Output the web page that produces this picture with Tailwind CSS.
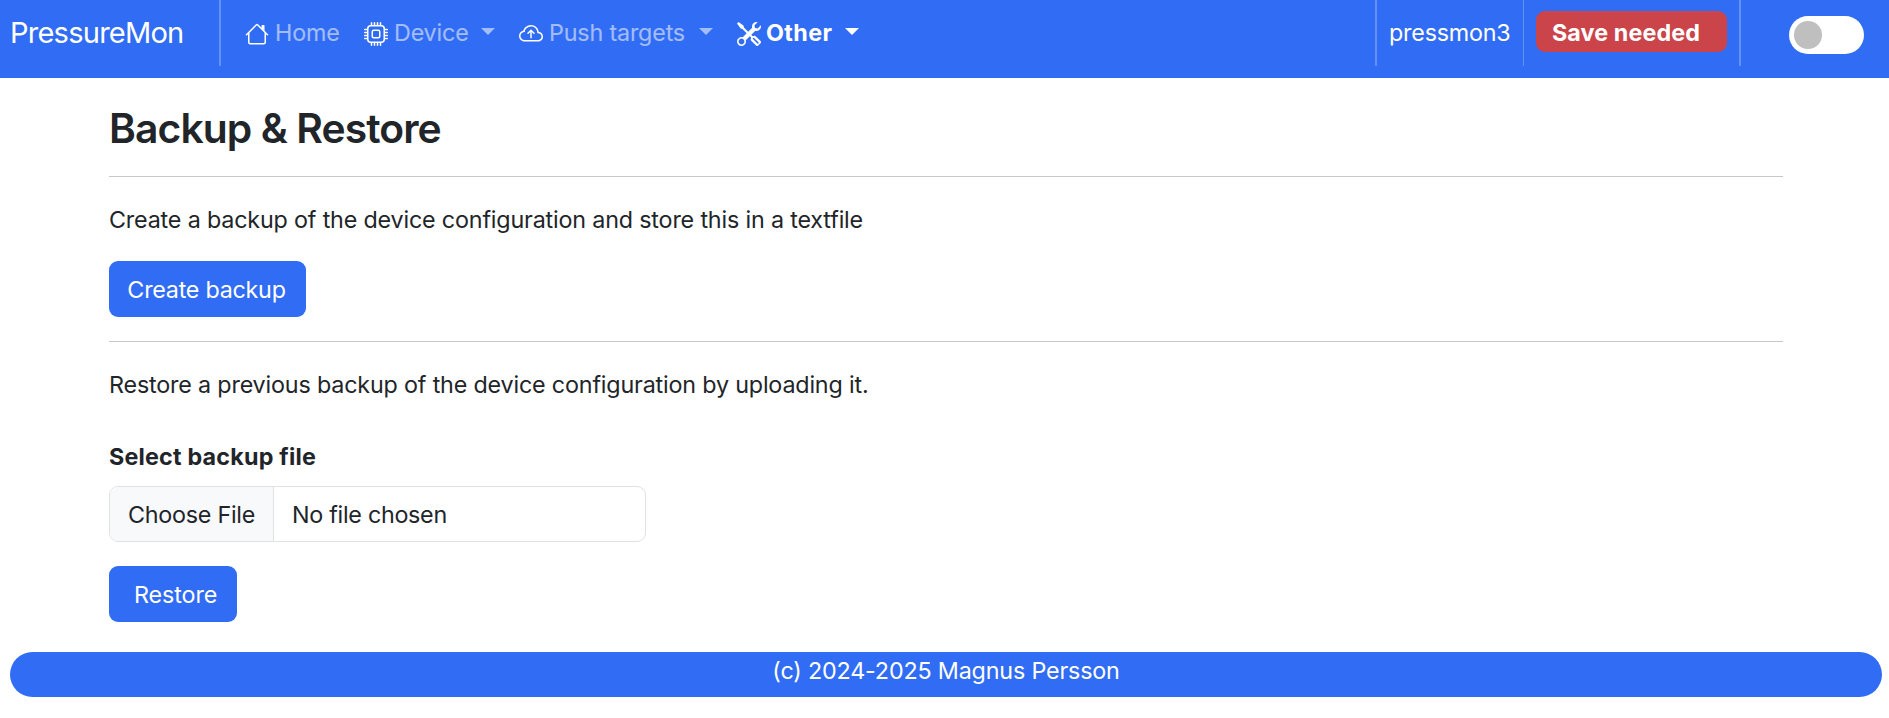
<!DOCTYPE html>
<html lang="en">
<head>
<meta charset="utf-8">
<title>PressureMon</title>
<script src="https://cdn.jsdelivr.net/npm/@tailwindcss/browser@4"></script>
</head>
<body class="h-[718px] overflow-hidden bg-white font-['Inter',sans-serif] text-[23.3px] leading-9 tracking-[-0.17px] text-[#212529]">
<nav class="flex h-[78px] items-start bg-[#316cf4] text-white">
  <a class="w-[219px] shrink-0 pl-[10px] pt-[15px] text-[29.1px] tracking-[-0.8px] whitespace-nowrap">PressureMon</a>
  <div class="h-[66px] w-0.5 bg-white/25"></div>
  <div class="ml-6 flex h-[66px] items-center gap-[24px] whitespace-nowrap">
    <a class="flex w-[95px] items-center gap-[6px]">
      <svg class="mt-0.5 size-6 shrink-0" viewBox="0 0 16 16" fill="currentColor"><path fill-rule="evenodd" d="M2 13.5V7h1v6.5a.5.5 0 0 0 .5.5h9a.5.5 0 0 0 .5-.5V7h1v6.5a1.5 1.5 0 0 1-1.5 1.5h-9A1.5 1.5 0 0 1 2 13.5zm11-11V6l-2-2V2.500a.5.5 0 0 1 .5-.5h1a.5.5 0 0 1 .5.5z"/><path fill-rule="evenodd" d="M7.293 1.500a1 1 0 0 1 1.414 0l6.647 6.646a.5.5 0 0 1-.708.708L8 2.207 1.354 8.854a.5.5 0 1 1-.708-.708L7.293 1.500z"/></svg>
      <span class="text-white/55">Home</span>
    </a>
    <a class="flex w-[131px] items-center gap-[6px]">
      <svg class="mt-0.5 size-6 shrink-0" viewBox="0 0 16 16" fill="currentColor"><path d="M5 0a.5.5 0 0 1 .5.5V2h1V.5a.5.5 0 0 1 1 0V2h1V.5a.5.5 0 0 1 1 0V2h1V.5a.5.5 0 0 1 1 0V2A2.500 2.500 0 0 1 14 4.500h1.500a.5.5 0 0 1 0 1H14v1h1.500a.5.5 0 0 1 0 1H14v1h1.500a.5.5 0 0 1 0 1H14v1h1.500a.5.5 0 0 1 0 1H14a2.500 2.500 0 0 1-2.500 2.500v1.500a.5.5 0 0 1-1 0V14h-1v1.500a.5.5 0 0 1-1 0V14h-1v1.500a.5.5 0 0 1-1 0V14h-1v1.500a.5.5 0 0 1-1 0V14A2.500 2.500 0 0 1 2 11.500H.5a.5.5 0 0 1 0-1H2v-1H.5a.5.5 0 0 1 0-1H2v-1H.5a.5.5 0 0 1 0-1H2v-1H.5a.5.5 0 0 1 0-1H2A2.500 2.500 0 0 1 4.500 2V.5A.5.5 0 0 1 5 0m-.5 3A1.500 1.500 0 0 0 3 4.500v7A1.500 1.500 0 0 0 4.500 13h7a1.500 1.500 0 0 0 1.500-1.500v-7A1.500 1.500 0 0 0 11.500 3zM5 6.500A1.500 1.500 0 0 1 6.500 5h3A1.500 1.500 0 0 1 11 6.500v3A1.500 1.500 0 0 1 9.500 11h-3A1.500 1.500 0 0 1 5 9.500zM6.500 6a.5.5 0 0 0-.5.5v3a.5.5 0 0 0 .5.5h3a.5.5 0 0 0 .5-.5v-3a.5.5 0 0 0-.5-.5z"/></svg>
      <span class="text-white/55">Device</span>
      <i class="mt-[-3px] ml-auto border-x-[7.2px] border-t-[7.2px] border-x-transparent border-t-white/55"></i>
    </a>
    <a class="flex w-[194px] items-center gap-[6px]">
      <svg class="mt-0.5 size-6 shrink-0" viewBox="0 0 16 16" fill="currentColor"><path fill-rule="evenodd" d="M7.646 5.146a.5.5 0 0 1 .708 0l2 2a.5.5 0 0 1-.708.708L8.500 6.707V10.500a.5.5 0 0 1-1 0V6.707L6.354 7.854a.5.5 0 1 1-.708-.708z"/><path d="M4.406 3.342A5.530 5.530 0 0 1 8 2c2.690 0 4.923 2 5.166 4.579C14.758 6.804 16 8.137 16 9.773 16 11.569 14.502 13 12.687 13H3.781C1.708 13 0 11.366 0 9.318c0-1.763 1.266-3.223 2.942-3.593.143-.863.698-1.723 1.464-2.383m.653.757c-.757.653-1.153 1.440-1.153 2.056v.448l-.445.049C2.064 6.805 1 7.952 1 9.318 1 10.785 2.230 12 3.781 12h8.906C13.980 12 15 10.988 15 9.773c0-1.216-1.020-2.228-2.313-2.228h-.5v-.5C12.188 4.825 10.328 3 8 3a4.530 4.530 0 0 0-2.941 1.100z"/></svg>
      <span class="text-white/55">Push targets</span>
      <i class="mt-[-3px] ml-auto border-x-[7.2px] border-t-[7.2px] border-x-transparent border-t-white/55"></i>
    </a>
    <a class="flex w-[122px] items-center gap-[5px]">
      <svg class="mt-0.5 size-6 shrink-0" viewBox="0 0 16 16" fill="currentColor"><path d="M1 0 0 1l2.200 3.081a1 1 0 0 0 .815.419h.07a1 1 0 0 1 .708.293l2.675 2.675-2.617 2.654A3.003 3.003 0 0 0 0 13a3 3 0 1 0 5.878-.851l2.654-2.617.968.968-.305.914a1 1 0 0 0 .242 1.023l3.270 3.270a.997.997 0 0 0 1.414 0l1.586-1.586a.997.997 0 0 0 0-1.414l-3.270-3.270a1 1 0 0 0-1.023-.242L10.500 9.500l-.96-.96 2.680-2.643A3.005 3.005 0 0 0 16 3q0-.405-.102-.777l-2.140 2.141L12 4l-.364-1.757L13.777.102a3 3 0 0 0-3.675 3.680L7.462 6.460 4.793 3.793a1 1 0 0 1-.293-.707v-.071a1 1 0 0 0-.419-.814zm9.646 10.646a.5.5 0 0 1 .708 0l2.914 2.915a.5.5 0 0 1-.707.707l-2.915-2.914a.5.5 0 0 1 0-.708M3 11l.471.242.529.026.287.445.445.287.026.529L5 13l-.242.471-.026.529-.445.287-.287.445-.529.026L3 15l-.471-.242L2 14.732l-.287-.445L1.268 14l-.026-.529L1 13l.242-.471.026-.529.445-.287.287-.445.529-.026z"/></svg>
      <span class="font-bold tracking-[0.4px]">Other</span>
      <i class="mt-[-3px] ml-auto border-x-[7.2px] border-t-[7.2px] border-x-transparent border-t-white"></i>
    </a>
  </div>
  <div class="ml-auto flex h-[66px] shrink-0 items-center whitespace-nowrap">
    <div class="h-full w-0.5 bg-white/25"></div>
    <span class="w-[146px] pl-3 tracking-[-0.2px]">pressmon3</span>
    <div class="h-full w-px bg-white/25"></div>
    <button class="mt-[-3px] ml-3 h-[41px] w-[191px] rounded-[9px] bg-[#cb444a] pt-[3px] pl-4 text-left font-bold tracking-[0.1px]">Save needed</button>
    <div class="ml-3 h-full w-0.5 bg-white/25"></div>
    <div class="mt-1 mr-[25px] ml-12 flex h-[38px] w-[75px] items-center rounded-full bg-white pl-[5px]"><div class="size-[27.5px] rounded-full bg-[#bfbfbf]"></div></div>
  </div>
</nav>
<main class="ml-[109px] flex w-[1674px] flex-col items-start pt-[25px]">
  <h3 class="text-[40.8px] leading-[50px] font-[560] tracking-[-0.9px]">Backup &amp; Restore</h3>
  <hr class="mt-[23px] w-full border-t border-[#c7c8c9]">
  <p class="mt-[25px]">Create a backup of the device configuration and store this in a textfile</p>
  <button class="mt-[23px] h-14 w-[197px] rounded-[9px] bg-[#316cf4] pt-0.5 pr-0.5 tracking-[-0.25px] text-white">Create backup</button>
  <hr class="mt-6 w-full border-t border-[#c7c8c9]">
  <p class="mt-[25px]">Restore a previous backup of the device configuration by uploading it.</p>
  <label class="mt-9 font-bold tracking-[0.2px]">Select backup file</label>
  <div class="mt-[11px] flex h-14 w-[537px] overflow-hidden rounded-[9px] border border-[#dee2e6]">
    <span class="flex w-[164px] items-center border-r border-[#dee2e6] bg-[#f8f9fa] pt-0.5 pl-[18px] tracking-[-0.25px]">Choose File</span>
    <span class="flex items-center pt-0.5 pl-[18px] tracking-[-0.28px]">No file chosen</span>
  </div>
  <button class="mt-6 h-14 w-32 rounded-[9px] bg-[#316cf4] pt-0.5 pl-[25px] text-left tracking-[-0.1px] text-white">Restore</button>
</main>
<footer class="mt-[30px] mr-[7px] ml-[10px] h-[45px] rounded-full bg-[#316cf4] pt-px text-center text-white">(c) 2024-2025 Magnus Persson</footer>
</body>
</html>
